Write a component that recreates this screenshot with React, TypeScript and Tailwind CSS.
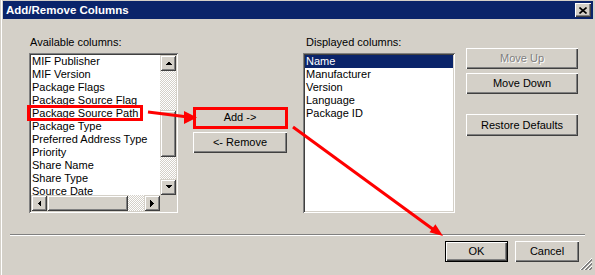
const availableColumns = [
  "MIF Publisher",
  "MIF Version",
  "Package Flags",
  "Package Source Flag",
  "Package Source Path",
  "Package Type",
  "Preferred Address Type",
  "Priority",
  "Share Name",
  "Share Type",
  "Source Date",
];

const displayedColumns = ["Name", "Manufacturer", "Version", "Language", "Package ID"];

const raised =
  "shadow-[inset_1px_1px_#d4d0c8,inset_-1px_-1px_#404040,inset_2px_2px_#fff,inset_-2px_-2px_#808080]";
const pushRaised = "shadow-[inset_1px_1px_#fff,inset_-1px_-1px_#404040,inset_-2px_-2px_#808080]";
const sunken =
  "shadow-[inset_1px_1px_#808080,inset_-1px_-1px_#fff,inset_2px_2px_#404040,inset_-2px_-2px_#d4d0c8]";
const dither =
  "bg-[image:repeating-conic-gradient(#fff_0_25%,#d4d0c8_0_50%)] bg-[length:2px_2px]";

function Arrow({ dir }: { dir: "up" | "down" | "left" | "right" }) {
  const vertical = dir === "up" || dir === "down";
  const points = {
    up: "0,4 7,4 3.5,0.5",
    down: "0,0 7,0 3.5,3.5",
    left: "4,0 4,7 0.5,3.5",
    right: "0,0 0,7 3.5,3.5",
  }[dir];
  return (
    <svg width={vertical ? 7 : 4} height={vertical ? 4 : 7} shapeRendering="crispEdges">
      <polygon points={points} fill="#000" />
    </svg>
  );
}

function ScrollButton({ dir }: { dir: "up" | "down" | "left" | "right" }) {
  return (
    <div className={`flex h-[16px] w-[16px] shrink-0 items-center justify-center bg-[#d4d0c8] ${raised}`}>
      <Arrow dir={dir} />
    </div>
  );
}

function PushButton({
  label,
  disabled,
  isDefault,
  className,
}: {
  label: string;
  disabled?: boolean;
  isDefault?: boolean;
  className?: string;
}) {
  return (
    <div
      className={`flex h-[21px] items-center justify-center bg-[#d4d0c8] ${
        isDefault ? "border border-black" : ""
      } ${pushRaised} ${className ?? ""}`}
    >
      <span className={disabled ? "text-[#808080] [text-shadow:1px_1px_0_#fff]" : "text-black"}>{label}</span>
    </div>
  );
}

function Overlay() {
  return (
    <svg className="pointer-events-none absolute left-0 top-0" width={595} height={275}>
      <g fill="none" stroke="#ff0000" strokeWidth={3}>
        <rect x={28.5} y={106.5} width={113} height={13} />
        <rect x={194.5} y={108.5} width={92} height={19} />
        <line x1={148} y1={112} x2={188} y2={117} />
        <line x1={293} y1={127} x2={434} y2={230} />
      </g>
      <g fill="#ff0000">
        <polygon points="184,111 197,117.5 184,124" />
        <polygon points="443,236 429.5,232.3 435.4,224.3" />
      </g>
    </svg>
  );
}

export default function App() {
  return (
    <div className="relative h-[275px] w-[595px] overflow-hidden bg-[#d4d0c8] font-['Liberation_Sans',Arial,sans-serif] text-[11px] leading-[13px] text-black">
      <div className="absolute bottom-0 left-[1px] top-0 w-px bg-white" />

      <div className="ml-[3px] mr-[2px] mt-[1px] flex h-[18px] items-center justify-between bg-[#0a246a] pl-[3px] pr-[2px]">
        <span className="text-[11.5px] font-bold text-white">Add/Remove Columns</span>
        <div className={`flex h-[14px] w-[16px] items-center justify-center bg-[#d4d0c8] ${pushRaised}`}>
          <svg width={8} height={7}>
            <path d="M0.5 0.5 L7.5 6.5 M7.5 0.5 L0.5 6.5" stroke="#000" strokeWidth={1.6} />
          </svg>
        </div>
      </div>

      <div className="ml-[29px] mt-[17px] flex items-start">
        {/* available */}
        <div className="w-[149px]">
          <div className="mb-[4px] pl-[1px]">Available columns:</div>
          <div className={`h-[160px] bg-white p-[2px] ${sunken}`}>
            <div className="flex">
              <div className="h-[140px] w-[129px] overflow-hidden bg-white pl-[1px]">
                {availableColumns.map((item) => (
                  <div key={item} className="h-[13px] whitespace-nowrap">
                    {item}
                  </div>
                ))}
              </div>
              <div className="flex h-[140px] w-[16px] flex-col">
                <ScrollButton dir="up" />
                <div className={`h-[39px] ${dither}`} />
                <div className={`h-[47px] bg-[#d4d0c8] ${raised}`} />
                <div className={`flex-1 ${dither}`} />
                <ScrollButton dir="down" />
              </div>
            </div>
            <div className="flex h-[16px]">
              <ScrollButton dir="left" />
              <div className={`w-[81px] bg-[#d4d0c8] ${raised}`} />
              <div className={`w-[16px] ${dither}`} />
              <ScrollButton dir="right" />
              <div className="w-[16px] bg-[#d4d0c8]" />
            </div>
          </div>
        </div>

        {/* add / remove */}
        <div className="ml-[15px] mt-[71px] flex w-[94px] flex-col gap-[4px]">
          <PushButton label="Add ->" />
          <PushButton label="<- Remove" />
        </div>

        {/* displayed */}
        <div className="ml-[16px] w-[152px]">
          <div className="mb-[4px] pl-[3px]">Displayed columns:</div>
          <div className={`h-[160px] bg-white p-[2px] ${sunken}`}>
            {displayedColumns.map((item, i) => (
              <div
                key={item}
                className={`h-[13px] whitespace-nowrap pl-[1px] ${i === 0 ? "bg-[#0a246a] text-white" : ""}`}
              >
                {item}
              </div>
            ))}
          </div>
        </div>

        {/* order buttons */}
        <div className="ml-[11px] mt-[12px] flex w-[112px] flex-col">
          <PushButton label="Move Up" disabled />
          <PushButton label="Move Down" className="mt-[4px]" />
          <PushButton label="Restore Defaults" className="mt-[20px] h-[22px]" />
        </div>
      </div>

      <div className="ml-[10px] mr-[10px] mt-[21px] h-[2px] border-b border-t border-b-white border-t-[#808080]" />

      <div className="mt-[5px] flex justify-end gap-[7px] pr-[16px]">
        <PushButton label="OK" isDefault className="w-[63px]" />
        <PushButton label="Cancel" className="w-[64px]" />
      </div>

      <svg className="absolute left-[580px] top-[258px]" width={12} height={12}>
        <g strokeWidth={1}>
          <path d="M12 0 L0 12 M12 4 L4 12 M12 8 L8 12" stroke="#fff" />
          <path d="M12 1 L1 12 M12 2 L2 12 M12 5 L5 12 M12 6 L6 12 M12 9 L9 12 M12 10 L10 12" stroke="#808080" />
        </g>
      </svg>

      <Overlay />
    </div>
  );
}
